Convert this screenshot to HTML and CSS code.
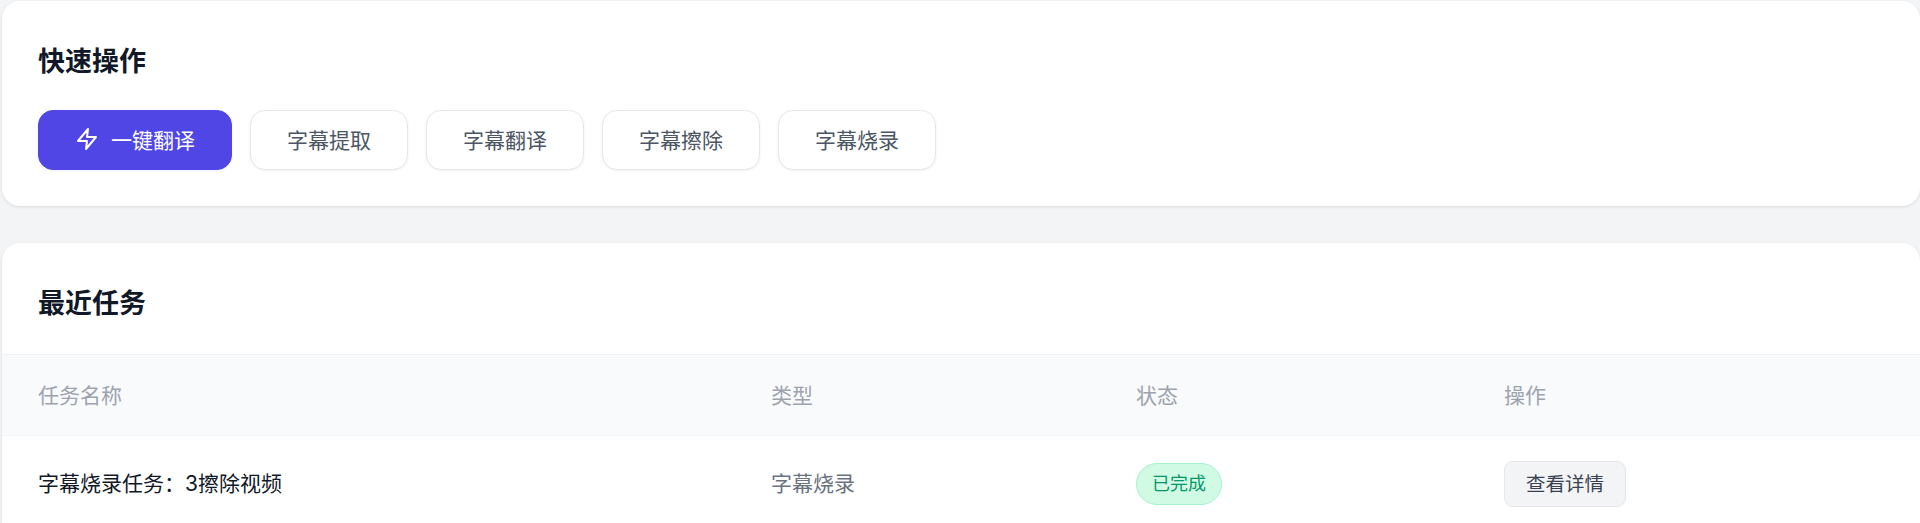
FILE: index.html
```html
<!DOCTYPE html>
<html lang="zh">
<head>
  <meta charset="UTF-8">
  <meta name="viewport" content="width=device-width, initial-scale=1.0">
  <title>快速操作</title>
  <link rel="stylesheet" href="styles.css">
</head>
<body>
  <!-- 快速操作 -->
  <section class="card quick-card">
    <h2 class="card-title">快速操作</h2>
    <div class="quick-actions">
      <button class="btn btn-primary">
        <svg class="btn-icon" viewBox="0 0 24 24" fill="none" stroke="currentColor" stroke-width="2" stroke-linecap="round" stroke-linejoin="round">
          <path d="M13 2 3 14h9l-1 8 10-12h-9l1-8z"/>
        </svg>
        一键翻译
      </button>
      <button class="btn">字幕提取</button>
      <button class="btn">字幕翻译</button>
      <button class="btn">字幕擦除</button>
      <button class="btn">字幕烧录</button>
    </div>
  </section>

  <!-- 最近任务 -->
  <section class="card tasks-card">
    <h2 class="card-title tasks-title">最近任务</h2>
    <table class="task-table">
      <thead>
        <tr>
          <th class="col-name">任务名称</th>
          <th class="col-type">类型</th>
          <th class="col-status">状态</th>
          <th>操作</th>
        </tr>
      </thead>
      <tbody>
        <tr>
          <td class="task-name">字幕烧录任务：3擦除视频</td>
          <td class="task-type">字幕烧录</td>
          <td><span class="badge">已完成</span></td>
          <td><button class="btn-detail">查看详情</button></td>
        </tr>
      </tbody>
    </table>
  </section>
</body>
</html>
```

FILE: styles.css
```css
/* 页面基础样式 */
html, body {
  height: 523px;
  overflow: hidden;
}

body {
  margin: 0;
  padding: 1px 0 0 2px;
  box-sizing: border-box;
  font-family: Inter, "Noto Sans CJK SC", sans-serif;
  background-color: #f3f4f6;
}

/* 卡片 */
.card {
  background-color: #fff;
  border-radius: 18px;
  box-shadow: 0 1px 3px rgba(0, 0, 0, 0.1);
}

.quick-card {
  height: 205px;
  padding: 37px 36px 0;
  box-sizing: border-box;
  margin-bottom: 37px;
}

.tasks-card {
  height: 280px;
  overflow: hidden;
  border-radius: 18px 18px 0 0;
}

.card-title {
  margin: 0;
  height: 48px;
  line-height: 48px;
  font-size: 27px;
  font-weight: 700;
  color: #111827;
}

.tasks-title {
  padding: 37px 36px 0;
  height: 74px;
  line-height: 48px;
}

/* 快捷按钮 */
.quick-actions {
  display: flex;
  gap: 18px;
  margin-top: 24px;
}

.btn {
  display: flex;
  align-items: center;
  justify-content: center;
  width: 158px;
  height: 60px;
  padding: 0 0 2px;
  font-family: inherit;
  font-size: 21px;
  color: #4b5563;
  background-color: #fff;
  border: 1.5px solid #e5e7eb;
  border-radius: 15px;
  box-shadow: 0 1px 3px rgba(0, 0, 0, 0.06);
}

.btn-primary {
  width: 194px;
  gap: 12px;
  color: #fff;
  background-color: #4f46e5;
  border-color: #4f46e5;
}

.btn-icon {
  width: 24px;
  height: 24px;
  margin-top: -1px;
}

/* 任务表格 */
.task-table {
  width: 100%;
  border-collapse: collapse;
  table-layout: fixed;
  font-size: 21px;
}

.task-table th {
  height: 81px;
  box-sizing: border-box;
  padding: 0 0 3px 36px;
  text-align: left;
  font-weight: 400;
  color: #9ca3af;
  background-color: #f9fafb;
  border-top: 1.5px solid #f3f4f6;
  border-bottom: 1.5px solid #f3f4f6;
}

.col-name { width: 733px; }
.col-type { width: 365px; }
.col-status { width: 368px; }

.task-table td {
  height: 96px;
  box-sizing: border-box;
  padding: 0 0 0 36px;
}

.task-table .task-name {
  padding-bottom: 4px;
  color: #111827;
}

.task-table .task-type {
  padding-bottom: 4px;
  color: #6b7280;
}

.badge {
  display: block;
  width: 86px;
  height: 42px;
  line-height: 39px;
  box-sizing: border-box;
  text-align: center;
  font-size: 18px;
  color: #059669;
  background-color: #d1fae5;
  border: 1.5px solid #a7f3d0;
  border-radius: 21px;
}

.btn-detail {
  display: block;
  width: 122px;
  height: 46px;
  padding: 0 0 3px;
  font-family: inherit;
  font-size: 19.5px;
  color: #374151;
  background-color: #f3f4f6;
  border: 1.5px solid #e5e7eb;
  border-radius: 9px;
}
```
